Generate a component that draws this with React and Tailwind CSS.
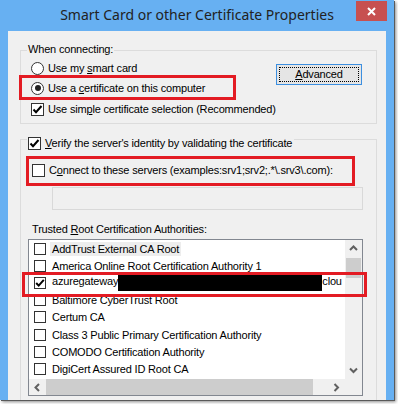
import { Fragment } from "react"

const certs = [
  { name: "AddTrust External CA Root", hl: true },
  { name: "America Online Root Certification Authority 1" },
  { name: "azuregateway", checked: true, redacted: true },
  { name: "Baltimore CyberTrust Root" },
  { name: "Certum CA" },
  { name: "Class 3 Public Primary Certification Authority" },
  { name: "COMODO Certification Authority" },
  { name: "DigiCert Assured ID Root CA" },
]

export default function App() {
  return (
    <div className="w-[398px] h-[404px] bg-white overflow-hidden font-['Liberation_Sans',Arial,sans-serif] text-[11px] leading-[13px] tracking-[-0.18px] text-black">
      <div className="relative w-[394px] h-[400px] bg-[#67b0f2] flex flex-col shadow-[1px_1px_0_#5a5a5a,2px_2px_3px_rgba(0,0,0,0.45)]">
        <TitleBar />

        <div className="flex-1 mx-[8px] bg-[#f0f0f0] overflow-hidden pt-[19px]">
          {/* When connecting */}
          <div className="relative ml-[12px] w-[357px] h-[74px] border border-[#dcdcdc] flex items-start">
            <span className="absolute left-[6px] -top-[8px] px-[1px] bg-[#f0f0f0]">When connecting:</span>

            <div className="flex-1 pt-[7px] pl-[10px]">
              <Option radio label={<>Use my <u>s</u>mart card</>} />
              <Option radio selected label={<>Use a <u>c</u>ertificate on this computer</>} />
              <div className="mt-[1px]">
                <Option checked label={<>Use sim<u>p</u>le certificate selection (Recommended)</>} />
              </div>
            </div>

            <button className="mt-[13px] mr-[14px] w-[86px] h-[21px] border border-[#3c8fe0] bg-[#e5e5e5] p-[2px]">
              <div className="h-full w-full border border-dotted border-black flex items-center justify-center">
                <span><u>A</u>dvanced</span>
              </div>
            </button>
          </div>

          {/* Verify identity */}
          <div className="relative mt-[15px] ml-[12px] w-[357px] h-[300px] border border-[#dcdcdc]">
            <div className="absolute left-[6px] -top-[7px] pl-[1px] pr-[2px] bg-[#f0f0f0]">
              <Option checked label={<><u>V</u>erify the server's identity by validating the certificate</>} />
            </div>

            <div className="pt-[20px] pl-[11px]">
              <Option label={<>C<u>o</u>nnect to these servers (examples:srv1;srv2;.*\.srv3\.com):</>} />
            </div>

            <div className="mt-[7px] ml-[31px] w-[311px] h-[23px] border border-[#d9d9d9] bg-[#f0f0f0]" />

            <div className="mt-[13px] pl-[11px]">Trusted <u>R</u>oot Certification Authorities:</div>

            <CertList />
          </div>
        </div>

        {/* annotation boxes */}
        <div className="absolute left-[19px] top-[75px] w-[217px] h-[25px] border-[3px] border-[#e31b23]" />
        <div className="absolute left-[26px] top-[156px] w-[329px] h-[30px] border-[3px] border-[#e31b23]" />
        <div className="absolute left-[22px] top-[272px] w-[345px] h-[25px] border-[3px] border-[#e31b23]" />
      </div>
    </div>
  )
}

function TitleBar() {
  return (
    <div className="relative h-[31px] flex items-center justify-center">
      <span className="font-['Noto_Sans',sans-serif] text-[14px] leading-[18px] tracking-normal text-[#222] -mt-[1px]">
        Smart Card or other Certificate Properties
      </span>
      <div className="absolute right-[7px] top-[1px] w-[31px] h-[20px] bg-[#c75050] flex items-center justify-center">
        <svg width="9" height="9" viewBox="0 0 9 9">
          <path d="M1 1 L8 8 M8 1 L1 8" stroke="white" strokeWidth="2" />
        </svg>
      </div>
    </div>
  )
}

function Option({ radio, selected, checked, label }) {
  return (
    <div className="h-[20px] flex items-center whitespace-nowrap">
      {radio ? <Radio selected={selected} /> : <Check checked={checked} />}
      <span className="ml-[4px]">{label}</span>
    </div>
  )
}

function Radio({ selected }) {
  return (
    <div className="w-[13px] h-[13px] rounded-full border border-[#333] bg-white flex items-center justify-center shrink-0">
      {selected && <div className="w-[6px] h-[6px] rounded-full bg-[#222]" />}
    </div>
  )
}

function Check({ checked }) {
  return (
    <div className="w-[13px] h-[13px] border border-[#333] bg-white shrink-0 flex items-center justify-center">
      {checked && (
        <svg width="11" height="11" viewBox="0 0 11 11">
          <path d="M1.5 5.5 L4 8.2 L9.5 2" fill="none" stroke="black" strokeWidth="2" />
        </svg>
      )}
    </div>
  )
}

function Chevron({ dir }) {
  const paths = {
    up: "M1 5 L4.5 1.5 L8 5",
    down: "M1 1.5 L4.5 5 L8 1.5",
    left: "M5 1 L1.5 4.5 L5 8",
    right: "M1.5 1 L5 4.5 L1.5 8",
  }
  const horiz = dir === "left" || dir === "right"
  return (
    <svg width={horiz ? 7 : 9} height={horiz ? 9 : 7} viewBox={horiz ? "0 0 7 9" : "0 0 9 7"}>
      <path d={paths[dir]} fill="none" stroke="#606060" strokeWidth="2" />
    </svg>
  )
}

function CertList() {
  return (
    <div className="mt-[3px] ml-[7px] w-[335px] h-[157px] border border-[#828790] bg-white grid grid-cols-[1fr_17px] grid-rows-[1fr_16px]">
      <div className="overflow-hidden whitespace-nowrap">
        {certs.map(c => (
          <div key={c.name} className="h-[17.2px] flex items-center pl-[5px]">
            <div className="w-[12px] h-[12px] border border-[#333] bg-white shrink-0 flex items-center justify-center">
              {c.checked && (
                <svg width="10" height="10" viewBox="0 0 10 10">
                  <path d="M1.2 5 L3.7 7.6 L8.8 1.8" fill="none" stroke="black" strokeWidth="2" />
                </svg>
              )}
            </div>
            <span className={`ml-[4px] px-[2px] leading-[14px] ${c.hl ? "bg-[#ededed]" : ""}`}>
              {c.redacted ? (
                <Fragment>
                  {c.name}
                  <span className="inline-block align-middle w-[204px] h-[17px] bg-black" />
                  clou
                </Fragment>
              ) : (
                c.name
              )}
            </span>
          </div>
        ))}
      </div>

      <div className="bg-[#f0f0f0] flex flex-col items-center">
        <div className="h-[17px] flex items-center"><Chevron dir="up" /></div>
        <div className="mt-[1px] w-[15px] h-[20px] bg-[#cdcdcd]" />
        <div className="flex-1" />
        <div className="h-[17px] flex items-center"><Chevron dir="down" /></div>
      </div>

      <div className="bg-[#f0f0f0] flex items-stretch">
        <div className="w-[17px] flex items-center justify-center"><Chevron dir="left" /></div>
        <div className="w-[267px] bg-[#cdcdcd]" />
        <div className="flex-1" />
        <div className="w-[17px] flex items-center justify-center"><Chevron dir="right" /></div>
      </div>
      <div className="bg-[#f0f0f0]" />
    </div>
  )
}
